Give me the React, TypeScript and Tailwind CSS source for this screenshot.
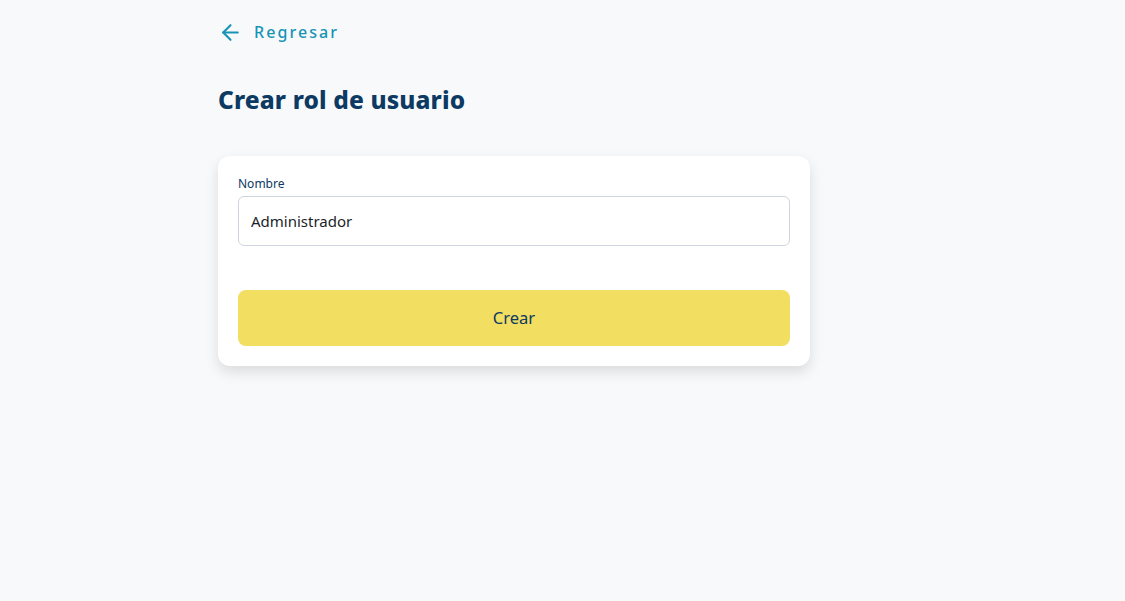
import { ArrowLeft } from 'lucide-react';

/** "Crear rol de usuario" form page. */
export default function App() {
  return (
    <div
      className="min-h-[601px] w-full bg-[#f8f9fb] text-[#0c3a63]"
      style={{ fontFamily: '"Noto Sans", "Open Sans", sans-serif' }}
    >
      <div className="ml-[218px] w-[592px] pt-[20px]">
        {/* Back link */}
        <button type="button" className="flex h-[24px] items-center gap-[11px] text-[#1794b5]">
          <ArrowLeft size={25} strokeWidth={2} />
          <span className="text-[16px] font-medium tracking-[0.13em]">Regresar</span>
        </button>

        <h1 className="mt-[41px] text-[24.5px] font-extrabold leading-[30px] tracking-[0.005em] text-[#0c3a63]">
          Crear rol de usuario
        </h1>

        {/* Card */}
        <div className="mt-[41px] rounded-[12px] bg-white px-[20px] pt-[20px] pb-[20px] shadow-[0_6px_14px_rgba(0,0,0,0.12)]">
          <label className="block text-[12px] leading-[16px] text-[#0c3a63]">Nombre</label>
          <input
            type="text"
            defaultValue="Administrador"
            className="mt-[4px] block h-[50px] w-full rounded-[6px] border border-[#cfd5de] bg-white px-[12px] text-[15px] text-[#1b1f29] outline-none"
          />
          <button
            type="button"
            className="mt-[44px] flex h-[56px] w-full items-center justify-center rounded-[8px] bg-[#f2de60] text-[16.5px] text-[#0c3a63]"
          >
            Crear
          </button>
        </div>
      </div>
    </div>
  );
}
